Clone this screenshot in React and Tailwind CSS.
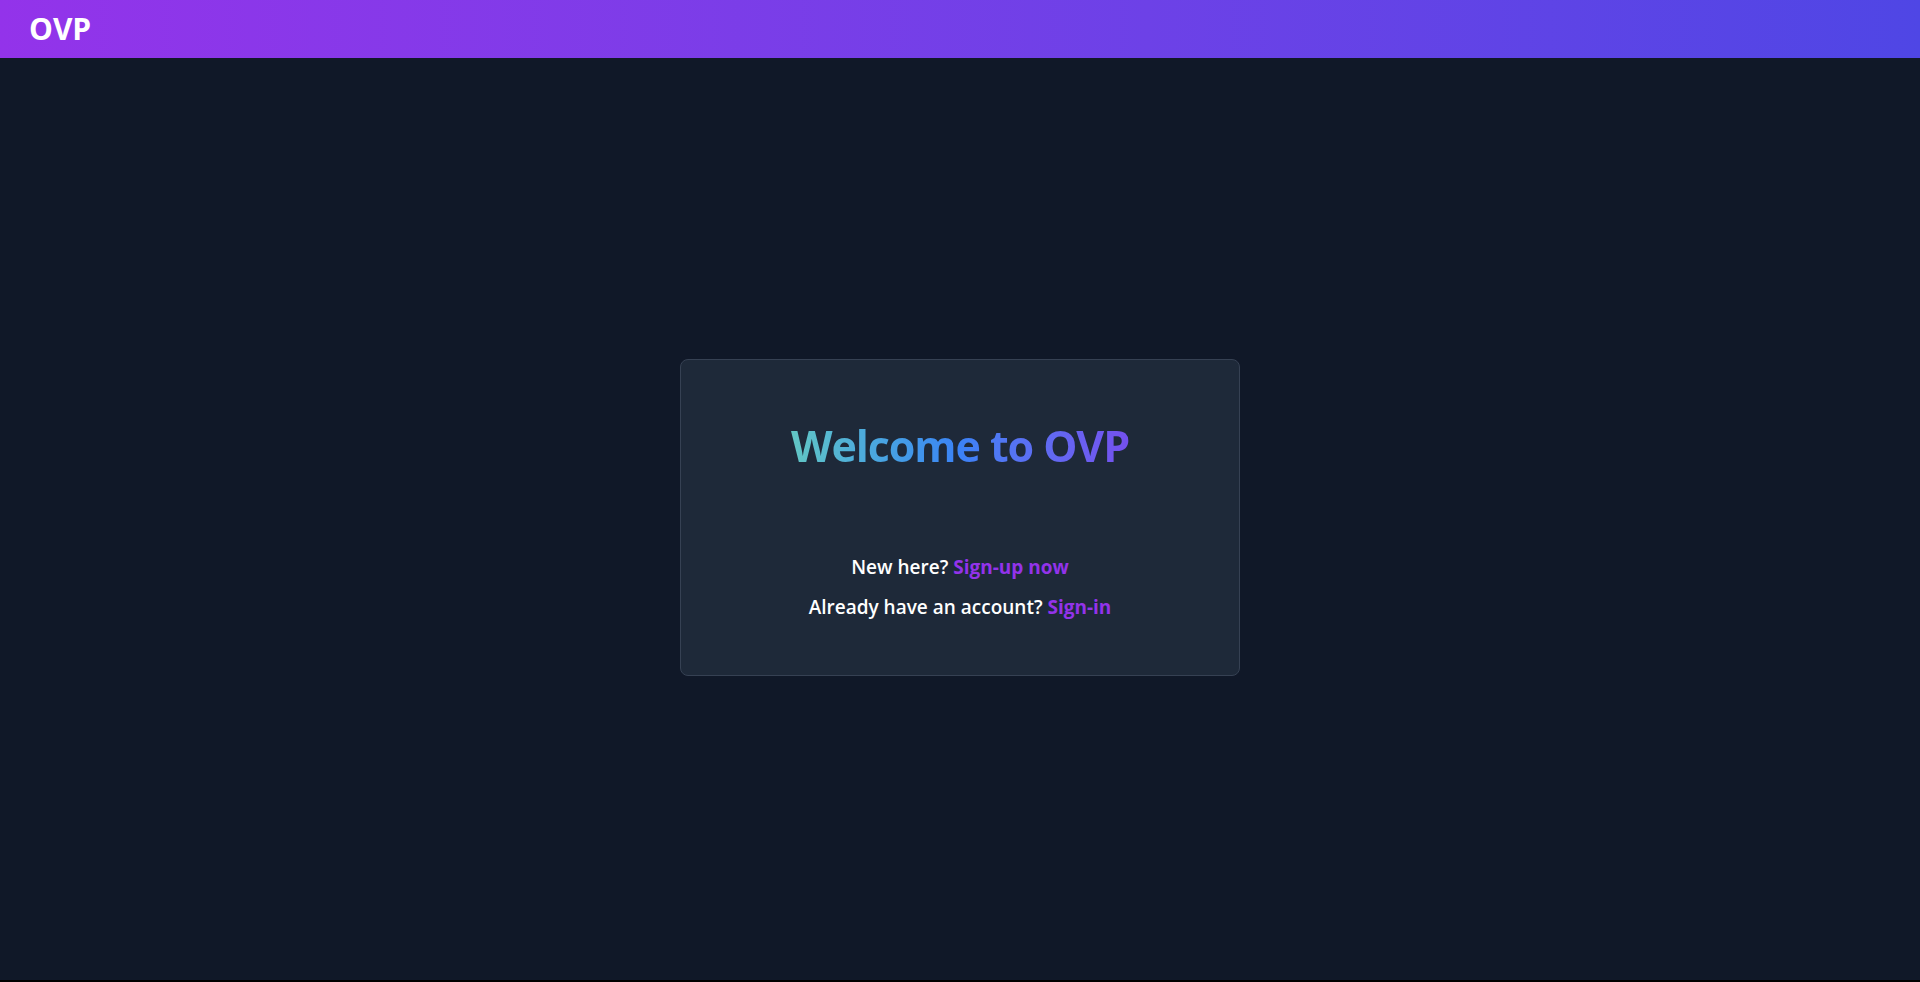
import React from 'react';

export default function App() {
  return (
    <div className="h-screen bg-black font-['Open_Sans',sans-serif]">
      <div className="h-[980px] flex flex-col bg-gray-900 text-white">
        {/* Top bar */}
        <header className="h-[58px] shrink-0 flex items-center px-[29px] bg-gradient-to-r from-[#9333ea] to-[#4f46e5]">
          <span className="text-[30px] leading-none font-bold">OVP</span>
        </header>

        {/* Landing card */}
        <main className="flex-1 flex items-center justify-center">
          <div className="w-[560px] h-[317px] mb-[3px] bg-gray-800 border border-gray-700 rounded-lg px-12 pt-[64px] text-center">
            <h1 className="text-[43px] leading-none font-bold tracking-tight">
              <span className="bg-gradient-to-r from-[#62c6c4] via-[#3b82f6] to-[#7450ee] bg-clip-text text-transparent">
                Welcome to OVP
              </span>
            </h1>

            <div className="mt-[86px] text-[19px] leading-7 font-semibold">
              <p>
                New here? <a href="#" className="text-[#9333ea] font-bold">Sign-up now</a>
              </p>
              <p className="mt-3">
                Already have an account? <a href="#" className="text-[#9333ea] font-bold">Sign-in</a>
              </p>
            </div>
          </div>
        </main>
      </div>
    </div>
  );
}
